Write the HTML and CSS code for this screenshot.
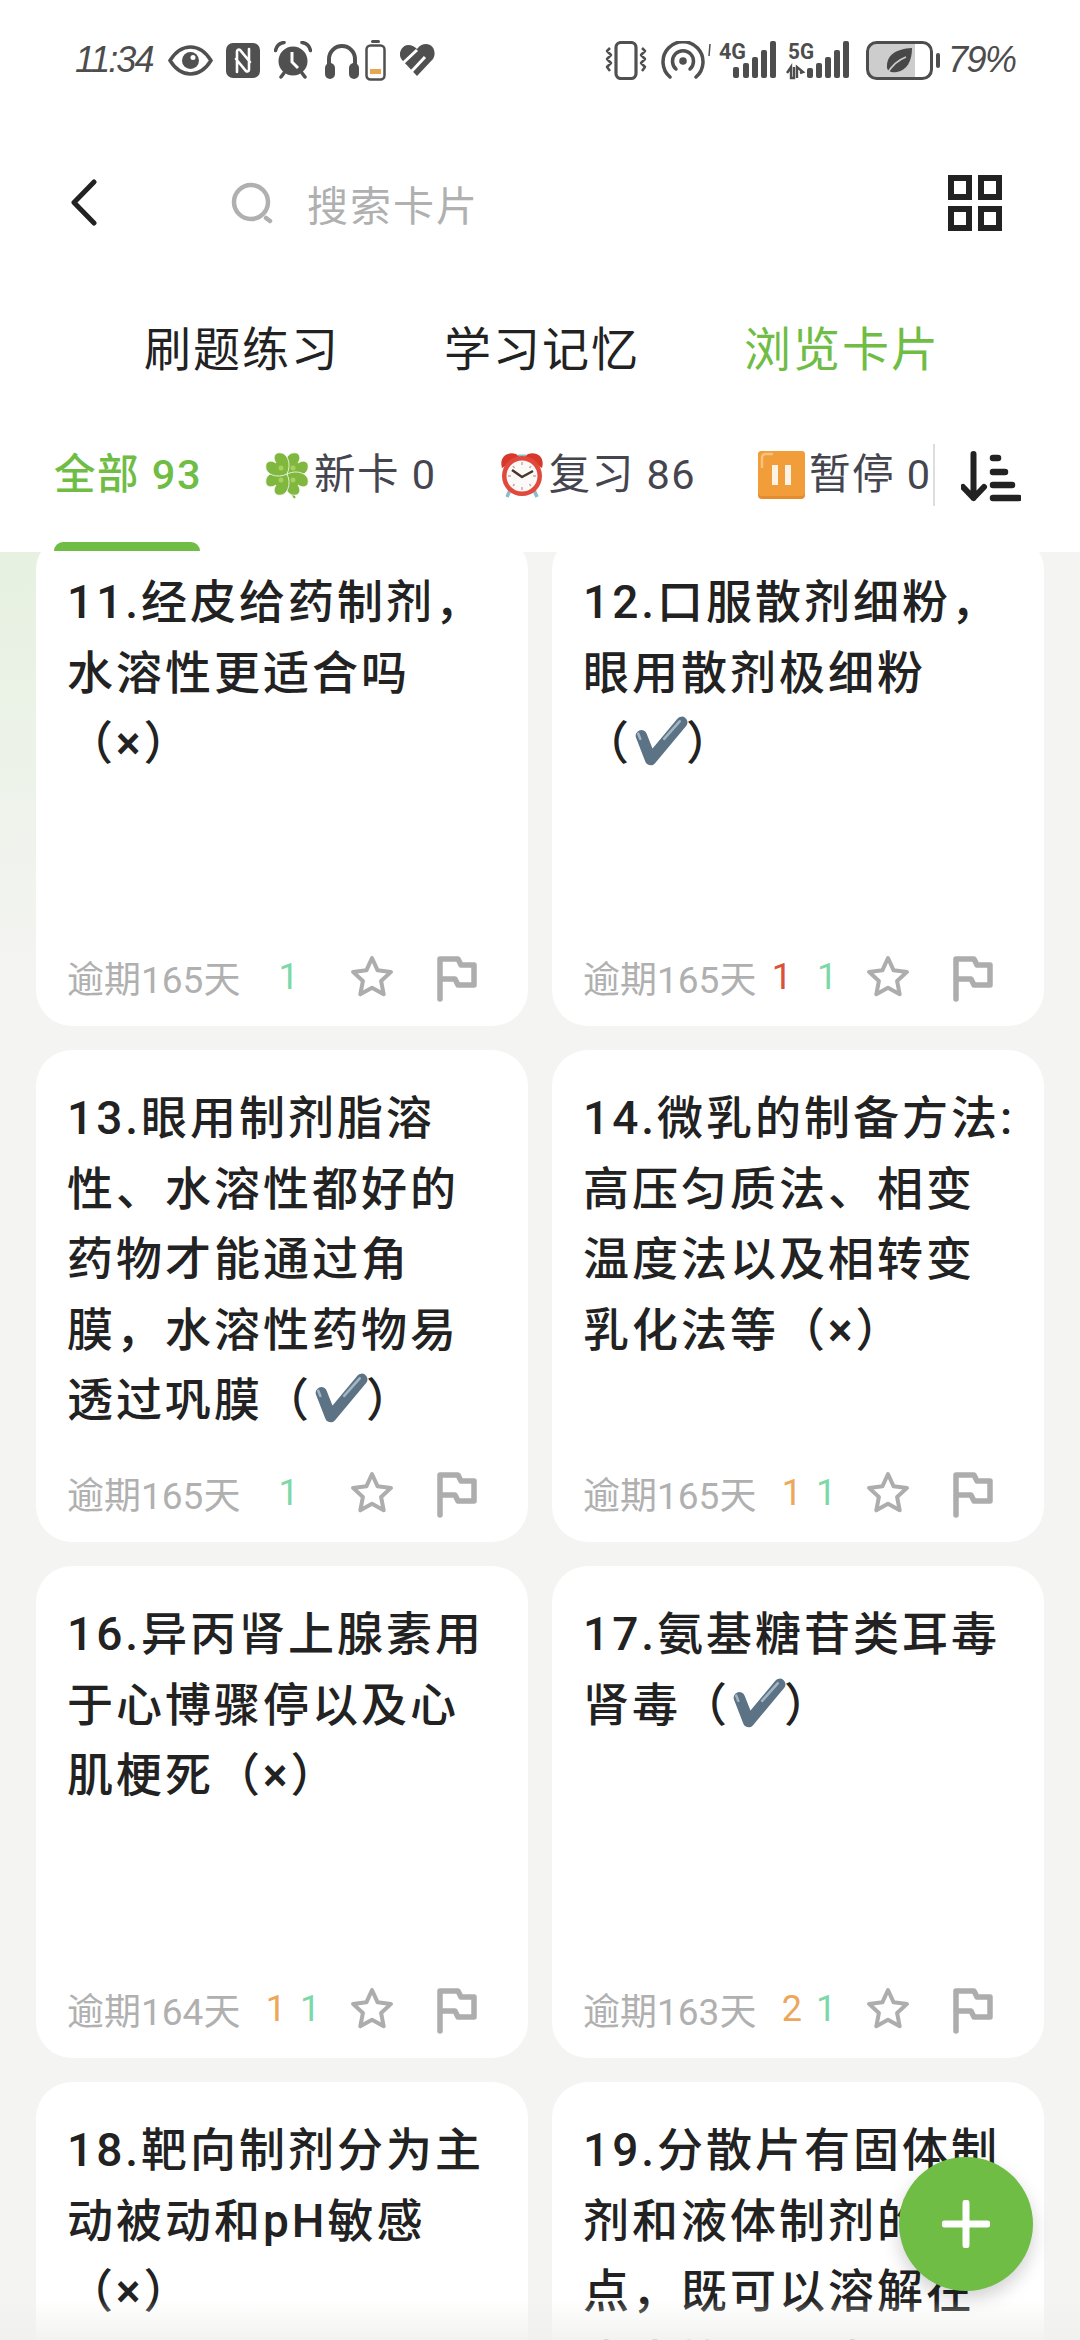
FILE: index.html
```html
<!DOCTYPE html>
<html lang="zh-CN">
<head>
<meta charset="utf-8">
<title>浏览卡片</title>
<link rel="stylesheet" href="styles.css">
</head>
<body>
<svg class="defs" width="0" height="0" aria-hidden="true">
  <symbol id="check" viewBox="0 0 56 54">
    <path d="M10 21 L19 44 L49 8" fill="none" stroke="#5b7384" stroke-width="11" stroke-linecap="round" stroke-linejoin="round"/>
    <path d="M7 19 L9 24 M32 24 L47 7" fill="none" stroke="#a3b5c1" stroke-width="2.5" stroke-linecap="round"/>
  </symbol>
  <symbol id="star" viewBox="0 0 44 44">
    <path d="M22 3 L27.6 15.3 L41 16.9 L31.100 26 L33.700 39.300 L22 32.700 L10.300 39.300 L12.900 26 L3 16.900 L16.400 15.300 Z" fill="none" stroke="#adadad" stroke-width="4" stroke-linejoin="round"/>
  </symbol>
  <symbol id="flag" viewBox="0 0 40 46">
    <path d="M3 43 V3 H21 L24 9 H37 V29 H21 L18 23 H3" fill="none" stroke="#adadad" stroke-width="5.500" stroke-linecap="round" stroke-linejoin="round"/>
  </symbol>
</svg>

<div class="app">
  <header class="header">
    <div class="status">
      <div class="status-side">
        <span class="clock">11:34</span>
        <svg class="ic-eye" width="45" height="31" viewBox="0 0 45 31"><path d="M2 15.500C8 6 15 2 22.500 2S37 6 43 15.500C37 25 30 29 22.500 29S8 25 2 15.500Z" fill="none" stroke="#505050" stroke-width="3.500"/><circle cx="22.500" cy="15.500" r="8.500" fill="#505050"/><circle cx="25" cy="12.500" r="2.500" fill="#fff"/></svg>
        <svg class="ic-nfc" width="34" height="35" viewBox="0 0 34 35"><rect width="34" height="35" rx="7" fill="#505050"/><path d="M11 29V8.500c0-2 2-2.500 3-1.500l10 12M23 6V26.500c0 2-2 2.500-3 1.500L10 16" fill="none" stroke="#fff" stroke-width="2.600" stroke-linecap="round"/></svg>
        <svg class="ic-alarm" width="38" height="38" viewBox="0 0 38 38"><circle cx="19" cy="20" r="14.500" fill="#505050"/><path d="M1.500 9.500C2.500 5 6 2 10 1.500M36.500 9.500C35.500 5 32 2 28 1.500M7 36l3-4M31 36l-3-4" fill="none" stroke="#505050" stroke-width="3.500" stroke-linecap="round"/><path d="M18 11V21l6 6" fill="none" stroke="#fff" stroke-width="3"/></svg>
        <svg class="ic-phones" width="34" height="37" viewBox="0 0 34 37"><path d="M4 26V17a13 13 0 0 1 26 0v9" fill="none" stroke="#505050" stroke-width="4"/><rect y="21" width="10" height="16" rx="5" fill="#505050"/><rect x="24" y="21" width="10" height="16" rx="5" fill="#505050"/></svg>
        <svg class="ic-cell" width="21" height="41" viewBox="0 0 21 41"><rect x="6" width="9" height="3" rx="1.500" fill="#505050"/><rect x="1.500" y="5.500" width="18" height="34" rx="4" fill="none" stroke="#505050" stroke-width="2.500"/><rect x="5" y="29" width="11" height="5" fill="#e9a650"/></svg>
        <svg class="ic-heart" width="36" height="32" viewBox="0 0 36 32"><path d="M18 32 L3 16 C-2 10 3 1 9 1 C13 1 16 3 18 5 C21 1 24 0 27 0 C34 0 38 8 34 15 Z" fill="#505050"/><path d="M3 20 L18 6 M12 28 L26 13" fill="none" stroke="#fff" stroke-width="3"/><path d="M4 17L0 21V32H10Z" fill="#fff"/></svg>
      </div>
      <div class="status-side">
        <svg class="ic-vib" width="42" height="39" viewBox="0 0 42 39"><rect x="11" y="1.500" width="20" height="36" rx="5" fill="none" stroke="#505050" stroke-width="3.200"/><path d="M5 7l-3 3 4 4-4 4 4 4-4 4 3 4M37 7l3 3-4 4 4 4-4 4 4 4-3 4" fill="none" stroke="#505050" stroke-width="2.500" stroke-linejoin="round"/></svg>
        <svg class="ic-spot" width="50" height="38" viewBox="0 0 50 38"><path d="M9 36A20 20 0 1 1 35 36" fill="none" stroke="#505050" stroke-width="3.500" stroke-linecap="round"/><path d="M15 28A10.500 10.500 0 1 1 29 28" fill="none" stroke="#505050" stroke-width="3.500" stroke-linecap="round"/><circle cx="22" cy="20" r="3.800" fill="#505050"/><path d="M49 3L48 15" stroke="#505050" stroke-width="1.500"/></svg>
        <svg class="ic-sig4" width="58" height="39" viewBox="0 0 58 39"><text class="net" x="0" y="18" textLength="27" lengthAdjust="spacingAndGlyphs">4G</text><rect x="14" y="26" width="6" height="11" rx="2" fill="#4d4d4d"/><rect x="24" y="22" width="6" height="15" rx="2" fill="#4d4d4d"/><rect x="33" y="16" width="6" height="21" rx="2" fill="#4d4d4d"/><rect x="42" y="9" width="6" height="28" rx="2" fill="#4d4d4d"/><rect x="51" y="0" width="6" height="37" rx="2" fill="#4d4d4d"/></svg>
        <svg class="ic-sig5" width="63" height="39" viewBox="0 0 63 39"><text class="net" x="1" y="18" textLength="26" lengthAdjust="spacingAndGlyphs">5G</text><path d="M0 32l4-6v11h3V26M10 37V26l6 5-3 1" fill="none" stroke="#4d4d4d" stroke-width="2.400"/><rect x="20" y="27" width="6" height="10" rx="2" fill="#4d4d4d"/><rect x="29" y="22" width="6" height="15" rx="2" fill="#4d4d4d"/><rect x="38" y="16" width="6" height="21" rx="2" fill="#4d4d4d"/><rect x="47" y="9" width="6" height="28" rx="2" fill="#4d4d4d"/><rect x="56" y="0" width="6" height="37" rx="2" fill="#4d4d4d"/></svg>
        <svg class="ic-batt" width="74" height="39" viewBox="0 0 74 39"><rect x="3" y="3" width="46" height="33" fill="#cdcdcd"/><rect x="1.500" y="1.500" width="64" height="36" rx="9" fill="none" stroke="#4d4d4d" stroke-width="3"/><rect x="70" y="12" width="4" height="15" rx="2" fill="#4d4d4d"/><path d="M46 7C30 8 20 14 21 27C22 31 26 32 31 31C41 29 46 20 46 7Z" fill="#484848"/><path d="M21 33C26 24 32 19 40 16" fill="none" stroke="#cdcdcd" stroke-width="1.800"/></svg>
        <span class="pct">79%</span>
      </div>
    </div>

    <div class="search">
      <svg class="back" width="27" height="47" viewBox="0 0 27 47"><path d="M24 3 L4 23.500 L24 44" fill="none" stroke="#222" stroke-width="5" stroke-linecap="round" stroke-linejoin="round"/></svg>
      <svg class="glass" width="42" height="42" viewBox="0 0 42 42"><circle cx="20" cy="20" r="17" fill="none" stroke="#b0b0b0" stroke-width="4.500"/><path d="M35 36l4 3" stroke="#b0b0b0" stroke-width="4.500" stroke-linecap="round"/></svg>
      <span class="search-text">搜索卡片</span>
      <div class="grid-icon"><i></i><i></i><i></i><i></i></div>
    </div>

    <nav class="tabs">
      <span>刷题练习</span>
      <span>学习记忆</span>
      <span class="on">浏览卡片</span>
    </nav>

    <div class="filters">
      <span class="filter active"><span class="lbl">全部 93</span></span>
      <span class="filter">
        <svg width="46" height="48" viewBox="-23 -23 46 48"><defs><path id="leaf" d="M0 0C-9-3-13-13-8-17C-5-20 -1-18 0-13C1-18 5-20 8-17C13-13 9-3 0 0Z"/></defs><path d="M0 2C0 11 3 18 8 24" fill="none" stroke="#7cb342" stroke-width="2"/><g fill="#80b83f" stroke="#fff" stroke-width=".6"><use href="#leaf" transform="rotate(45) scale(1.200)"/><use href="#leaf" transform="rotate(135) scale(1.200)"/><use href="#leaf" transform="rotate(225) scale(1.200)"/><use href="#leaf" transform="rotate(315) scale(1.200)"/></g><g fill="#a9cf5e"><circle cx="-6" cy="-6" r="2.500"/><circle cx="6" cy="-6" r="2.500"/><circle cx="-6" cy="6" r="2.500"/><circle cx="6" cy="6" r="2.500"/></g></svg>
        <span class="lbl">新卡 0</span>
      </span>
      <span class="filter">
        <svg width="46" height="48" viewBox="0 0 46 48"><path d="M11 39l-3 7M35 39l3 7" stroke="#8fbccb" stroke-width="3.500"/><path d="M19 5H27M23 5V9" stroke="#8fbccb" stroke-width="3"/><path d="M3 17C0 7 7 0 17 3C19 4 20 6 20 7ZM43 17C46 7 39 0 29 3C27 4 26 6 26 7Z" fill="#d8382c"/><circle cx="23" cy="25" r="20" fill="#e0493b"/><circle cx="23" cy="25" r="15.500" fill="#fbfaf8"/><path d="M23 11v3M23 36v3M9 25h3M34 25h3M14 15l1.500 2M32 15l-1.500 2M14 35l1.500-2M32 35l-1.500-2" stroke="#c9a9a5" stroke-width="1.500"/><path d="M13 19L23 26L34 20" fill="none" stroke="#4a342e" stroke-width="2.500" stroke-linejoin="round"/></svg>
        <span class="lbl">复习 86</span>
      </span>
      <span class="filter">
        <svg width="47" height="48" viewBox="0 0 47 48"><rect width="47" height="48" rx="4" fill="#e58c2f"/><rect width="47" height="45" rx="4" fill="#f09d3a"/><path d="M4 17V7Q4 3 8 3H15" fill="none" stroke="#f8c27d" stroke-width="2.500"/><rect x="14" y="14" width="6" height="20" fill="#fdf3e4"/><rect x="27" y="14" width="6" height="20" fill="#fdf3e4"/></svg>
        <span class="lbl">暂停 0</span>
      </span>
      <span class="rule"></span>
      <svg class="sort" width="60" height="52" viewBox="0 0 60 52"><path d="M12.500 4V48M2 37L12.500 48L23 37" fill="none" stroke="#222" stroke-width="6" stroke-linecap="round" stroke-linejoin="round"/><path d="M32 8H37M32 22H44M32 35H51M32 48H58" fill="none" stroke="#222" stroke-width="6.500" stroke-linecap="round"/></svg>
    </div>
    <div class="indicator"></div>
  </header>

  <main class="list">
    <article class="card">
      <p class="card-text">11.经皮给药制剂，<br>水溶性更适合吗<br>（×）</p>
      <div class="foot"><span class="due">逾期165天</span><span class="counts"><b class="g">1</b></span><svg class="star"><use href="#star"/></svg><svg class="flag"><use href="#flag"/></svg></div>
    </article>
    <article class="card">
      <p class="card-text">12.口服散剂细粉，<br>眼用散剂极细粉<br>（<svg class="tick"><use href="#check"/></svg>）</p>
      <div class="foot"><span class="due">逾期165天</span><span class="counts"><b class="r">1</b><b class="g">1</b></span><svg class="star"><use href="#star"/></svg><svg class="flag"><use href="#flag"/></svg></div>
    </article>
    <article class="card">
      <p class="card-text">13.眼用制剂脂溶<br>性、水溶性都好的<br>药物才能通过角<br>膜，水溶性药物易<br>透过巩膜（<svg class="tick"><use href="#check"/></svg>）</p>
      <div class="foot"><span class="due">逾期165天</span><span class="counts"><b class="g">1</b></span><svg class="star"><use href="#star"/></svg><svg class="flag"><use href="#flag"/></svg></div>
    </article>
    <article class="card">
      <p class="card-text">14.微乳的制备方法:<br>高压匀质法、相变<br>温度法以及相转变<br>乳化法等（×）</p>
      <div class="foot"><span class="due">逾期165天</span><span class="counts"><b class="o">1</b><b class="g">1</b></span><svg class="star"><use href="#star"/></svg><svg class="flag"><use href="#flag"/></svg></div>
    </article>
    <article class="card">
      <p class="card-text">16.异丙肾上腺素用<br>于心博骤停以及心<br>肌梗死（×）</p>
      <div class="foot"><span class="due">逾期164天</span><span class="counts"><b class="o">1</b><b class="g">1</b></span><svg class="star"><use href="#star"/></svg><svg class="flag"><use href="#flag"/></svg></div>
    </article>
    <article class="card">
      <p class="card-text">17.氨基糖苷类耳毒<br>肾毒（<svg class="tick"><use href="#check"/></svg>）</p>
      <div class="foot"><span class="due">逾期163天</span><span class="counts"><b class="o">2</b><b class="g">1</b></span><svg class="star"><use href="#star"/></svg><svg class="flag"><use href="#flag"/></svg></div>
    </article>
    <article class="card">
      <p class="card-text">18.靶向制剂分为主<br>动被动和pH敏感<br>（×）</p>
    </article>
    <article class="card">
      <p class="card-text">19.分散片有固体制<br>剂和液体制剂的特<br>点，既可以溶解在<br>水中饮用，也可以</p>
    </article>
  </main>

  <div class="fade"></div>
  <button class="fab" aria-label="添加"><svg width="48" height="48" viewBox="0 0 48 48"><path d="M24 3V45M3 24H45" stroke="#fff" stroke-width="7" stroke-linecap="round"/></svg></button>
</div>
</body>
</html>
```
FILE: styles.css
```css
* { box-sizing: border-box; }
html, body { margin: 0; padding: 0; background: #fff; }
body { font-family: Roboto, "Noto Sans CJK SC", sans-serif; }
.defs { display: block; height: 0; }
.app { position: relative; width: 1080px; height: 2340px; overflow: hidden; background: #f4f4f2; }

.header { position: relative; z-index: 1; height: 552px; background: #fff; }

.status { height: 120px; padding: 0 68px 0 75px; display: flex; justify-content: space-between; align-items: center; }
.status-side { display: flex; align-items: center; }
.clock, .pct { font-family: "Liberation Sans", sans-serif; font-style: italic; color: #4d4d4d; font-size: 36px; line-height: 40px; }
.clock { width: 84px; letter-spacing: -2px; margin-right: 9px; }
.pct { width: 64px; margin-left: 8px; letter-spacing: -1.500px; }
.ic-nfc, .ic-alarm, .ic-phones, .ic-cell, .ic-heart { margin-left: 13px; }
.ic-alarm { margin-left: 14px; }
.ic-cell { margin-left: 6px; }
.ic-spot, .ic-sig4, .ic-sig5, .ic-batt { margin-left: 14px; }
.ic-sig4 { margin-left: 8px; overflow: visible; }
.ic-sig5 { margin-left: 10px; overflow: visible; }
.ic-batt { margin-left: 16px; }
.net { font-family: Roboto, sans-serif; font-weight: 700; font-size: 22px; fill: #4d4d4d; }

.search { height: 165px; padding: 0 78px 0 70px; display: flex; align-items: center; }
.glass { margin-left: 134px; }
.search-text { margin-left: 34px; font-size: 41px; letter-spacing: 2px; color: #b0b0b0; }
.grid-icon { margin-left: auto; display: grid; grid-template-columns: 24px 24px; grid-template-rows: 25px 25px; gap: 6px; }
.grid-icon i { display: block; border: 6px solid #222; }

.tabs { height: 123px; padding: 0 0 3px 4px; display: flex; justify-content: center; align-items: center; gap: 104px; font-size: 47px; letter-spacing: 2px; color: #222; }
.tabs .on { color: #6fbd45; }

.filters { height: 134px; padding-left: 54px; display: flex; align-items: center; gap: 62px; }
.filter { display: flex; align-items: center; gap: 4px; font-size: 41.500px; letter-spacing: 1.500px; color: #45454f; white-space: nowrap; }
.lbl { padding-bottom: 8px; }
.filter.active { color: #6fbd45; font-weight: 500; }
.rule { width: 2px; height: 62px; background: #ddd; margin-left: -61px; }
.sort { margin-left: -36px; margin-top: 2px; }
.indicator { width: 146px; height: 9px; margin-left: 54px; background: #6fbd45; border-radius: 9px 9px 0 0; }

.list {
  margin-top: -18px; padding: 0 36px;
  height: 1806px;
  display: grid; grid-template-columns: 492px 492px; grid-auto-rows: 492px; gap: 24px;
  background: radial-gradient(ellipse 520px 420px at 0 18px, #e6f1e0, #f4f4f2);
}
.card { display: flex; flex-direction: column; padding: 33px 0 27px 31px; background: #fff; border-radius: 36px; }
.card-text { flex: 1; margin: 0; font-size: 46px; font-weight: 500; line-height: 70.500px; letter-spacing: 3px; color: #222; white-space: nowrap; }
.tick { width: 58px; height: 56px; vertical-align: -11px; margin: 0 -3px 0 -1px; }

.foot { height: 44px; padding-right: 51px; display: flex; align-items: center; }
.due { width: 172px; font-size: 37px; color: #b0b0b0; white-space: nowrap; }
.counts { flex: 1; display: flex; justify-content: center; gap: 14px; font-size: 36px; padding-right: 12px; }
.counts b { font-weight: 400; }
.counts .g { color: #7dd8a8; }
.counts .o { color: #eba75c; margin-left: 9px; }
.counts .r { color: #d9503f; margin-right: 11px; }
.star { width: 44px; height: 44px; margin-right: 43px; }
.flag { width: 40px; height: 46px; margin-top: 3px; }

.fade { position: absolute; z-index: 2; left: 0; right: 0; bottom: 0; height: 40px; background: linear-gradient(rgba(240,240,238,0), rgba(240,240,238,.85)); }
.fab { position: absolute; z-index: 3; right: 47px; bottom: 49px; width: 134px; height: 134px; padding: 0; border: 0; border-radius: 50%; background: #6fbd45; box-shadow: 0 8px 18px rgba(0,0,0,.18); display: flex; align-items: center; justify-content: center; }
```
